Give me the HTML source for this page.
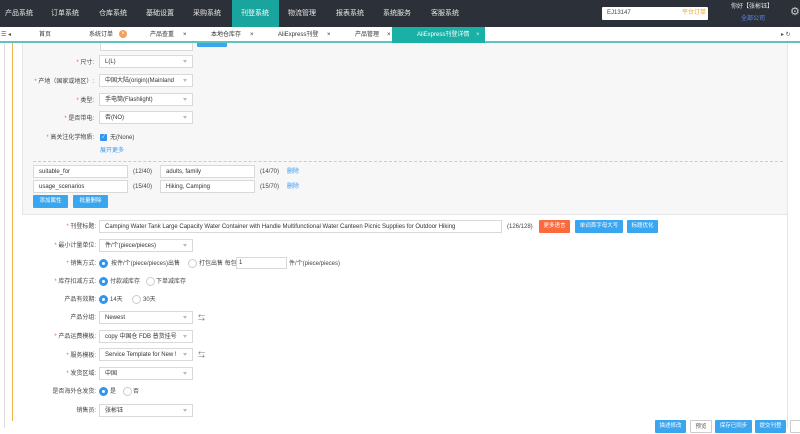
<!DOCTYPE html>
<html><head><meta charset="utf-8"><style>
*{box-sizing:border-box;margin:0;padding:0}
body{width:800px;height:428px;overflow:hidden;background:#fff;font-family:"Liberation Sans","Noto Sans CJK SC",sans-serif;font-size:6.5px;color:#333;position:relative}
.a{position:absolute}
.nav{left:0;top:0;width:800px;height:27px;background:#2c3038;z-index:5}
.nav span{position:absolute;top:9px;color:#e8e8e8;font-size:7px;line-height:9px}
.tabs{left:0;top:27px;width:800px;height:16px;background:#fff;border-bottom:2px solid #5cc4bd;z-index:5}
.tabs span{position:absolute;top:4px;font-size:6px;line-height:9px;color:#333}
.x{color:#aaa}
.lbl{position:absolute;text-align:right;font-size:6px;line-height:9px;color:#444;width:120px;margin-top:1px}
.lbl b{color:#f55;font-weight:normal}
.sel{position:absolute;height:13px;border:1px solid #d9d9d9;background:#fff;font-size:6px;line-height:11px;padding:1px 5px 0;color:#333;white-space:nowrap;overflow:hidden}
.sel:after{content:"";position:absolute;right:5px;top:4px;border:2.5px solid transparent;border-top:3px solid #bbb}
.inp{position:absolute;height:13px;border:1px solid #d9d9d9;background:#fff;font-size:6px;line-height:11px;padding:1px 5px 0;white-space:nowrap;overflow:hidden}
.btn{position:absolute;height:13px;background:#3aa6f0;color:#fff;font-size:5.5px;text-align:center;line-height:13px;border-radius:1px}
.rad{position:absolute;width:9px;height:9px;border-radius:50%;border:1px solid #ccc;background:#fff}
.rad.on{border:3px solid #2f95ee}
.t{position:absolute;font-size:6px;line-height:9px;color:#444;white-space:nowrap;margin-top:1px}
</style></head><body>
<div class="a nav">
<span style="left:5px">产品系统</span><span style="left:51px">订单系统</span><span style="left:99px">仓库系统</span><span style="left:146px">基础设置</span><span style="left:193px">采购系统</span>
<div class="a" style="left:232px;top:0;width:47px;height:27px;background:#19a59d"></div>
<span style="left:241px;color:#fff">刊登系统</span><span style="left:288px">物流管理</span><span style="left:336px">报表系统</span><span style="left:383px">系统服务</span><span style="left:431px">客服系统</span>
<div class="a" style="left:602px;top:7px;width:106px;height:13px;background:#fff;border-radius:1px"></div>
<span style="left:607px;top:9px;color:#444;font-size:6px">EJ13147</span><span style="left:682px;top:9px;color:#f5a623;font-size:6px">平台订单</span>
<span style="left:731px;top:3px;font-size:6px">你好【张彬钰】</span><span style="left:741px;top:15px;font-size:6px;color:#5b8df5">全部公司</span>
<span style="left:790px;top:6px;font-size:11px;line-height:13px;color:#ccc">⚙</span>
</div>
<div class="a tabs">
<span style="left:1px;color:#555">☰ ◂</span>
<span style="left:39px">首页</span><span style="left:89px">系统订单</span><span style="left:119px;top:3px;width:8px;height:8px;border-radius:50%;background:#f5a05a;color:#fff;font-size:6px;line-height:8px;text-align:center">×</span>
<span style="left:150px">产品查重</span><span class="x" style="left:183px">×</span>
<span style="left:211px">本地仓库存</span><span class="x" style="left:250px">×</span>
<span style="left:278px">AliExpress刊登</span><span class="x" style="left:327px">×</span>
<span style="left:355px">产品管理</span><span class="x" style="left:387px">×</span>
<div class="a" style="left:392px;top:0;width:93px;height:16px;background:#19b0a6"></div>
<span style="left:417px;color:#fff">AliExpress刊登详情</span><span style="left:476px;color:#bfe">×</span>
<span style="left:781px;color:#555">▸ ↻</span>
</div>
<div class="a" style="left:4px;top:43px;width:1px;height:385px;background:#ddd"></div>
<div class="a" style="left:12px;top:43px;width:1px;height:378px;background:#f3b34a"></div>
<div class="a" style="left:22px;top:43px;width:766px;height:172px;background:#f7f7f7;border:1px solid #e6e6e6;border-top:none"></div>
<div class="a" style="left:787px;top:43px;width:1px;height:385px;background:#e6e6e6"></div>
<div class="inp" style="left:100px;top:38px;width:93px"></div><div class="btn" style="left:197px;top:38px;width:30px;height:9px"></div>
<div class="lbl" style="left:-26px;top:58px"><b>* </b>尺寸:</div><div class="sel" style="left:99px;top:55px;width:94px">L(L)</div>
<div class="lbl" style="left:-26px;top:77px"><b>* </b>产地（国家或地区）:</div><div class="sel" style="left:99px;top:74px;width:94px">中国大陆(origin)(Mainland</div>
<div class="lbl" style="left:-26px;top:96px"><b>* </b>类型:</div><div class="sel" style="left:99px;top:93px;width:94px">手电筒(Flashlight)</div>
<div class="lbl" style="left:-26px;top:114px"><b>* </b>是否带电:</div><div class="sel" style="left:99px;top:111px;width:94px">否(NO)</div>
<div class="lbl" style="left:-26px;top:133px"><b>* </b>高关注化学物质:</div>
<div class="a" style="left:100px;top:134px;width:7px;height:7px;background:#2f95ee;border-radius:1px;color:#fff;font-size:5px;line-height:7px;text-align:center">✓</div><div class="t" style="left:110px;top:133px">无(None)</div>
<div class="t" style="left:100px;top:146px;color:#3a9af0">展开更多</div>
<div class="a" style="left:33px;top:161px;width:750px;border-top:1px dashed #ccc"></div>
<div class="inp" style="left:33px;top:165px;width:95px">suitable_for</div><div class="t" style="left:133px;top:167px">(12/40)</div>
<div class="inp" style="left:160px;top:165px;width:95px">adults, family</div><div class="t" style="left:260px;top:167px">(14/70)</div><div class="t" style="left:287px;top:167px;color:#3a9af0">删除</div>
<div class="inp" style="left:33px;top:180px;width:95px">usage_scenarios</div><div class="t" style="left:133px;top:182px">(15/40)</div>
<div class="inp" style="left:160px;top:180px;width:95px">Hiking, Camping</div><div class="t" style="left:260px;top:182px">(15/70)</div><div class="t" style="left:287px;top:182px;color:#3a9af0">删除</div>
<div class="btn" style="left:33px;top:195px;width:35px">添加属性</div><div class="btn" style="left:73px;top:195px;width:35px">批量删除</div>

<div class="lbl" style="left:-24px;top:222px"><b>* </b>刊登标题:</div><div class="inp" style="left:99px;top:220px;width:403px">Camping Water Tank Large Capacity Water Container with Handle Multifunctional Water Canteen Picnic Supplies for Outdoor Hiking</div>
<div class="t" style="left:507px;top:222px">(126/128)</div>
<div class="btn" style="left:539px;top:220px;width:31px;background:#fa6a3c">更多语言</div><div class="btn" style="left:575px;top:220px;width:48px">单词首字母大写</div><div class="btn" style="left:627px;top:220px;width:31px">标题优化</div>
<div class="lbl" style="left:-24px;top:241px"><b>* </b>最小计量单位:</div><div class="sel" style="left:99px;top:239px;width:94px">件/个(piece/pieces)</div>
<div class="lbl" style="left:-24px;top:259px"><b>* </b>销售方式:</div><div class="rad on" style="left:99px;top:259px"></div><div class="t" style="left:111px;top:259px">按件/个(piece/pieces)出售</div>
<div class="rad" style="left:188px;top:259px"></div><div class="t" style="left:199px;top:259px">打包出售 每包</div><div class="inp" style="left:236px;top:257px;width:51px;height:12px;line-height:10px;padding:0 2px">1</div><div class="t" style="left:289px;top:259px">件/个(piece/pieces)</div>
<div class="lbl" style="left:-24px;top:277px"><b>* </b>库存扣减方式:</div><div class="rad on" style="left:99px;top:277px"></div><div class="t" style="left:110px;top:277px">付款减库存</div><div class="rad" style="left:146px;top:277px"></div><div class="t" style="left:156px;top:277px">下单减库存</div>
<div class="lbl" style="left:-24px;top:295px">产品有效期:</div><div class="rad on" style="left:99px;top:295px"></div><div class="t" style="left:110px;top:295px">14天</div><div class="rad" style="left:132px;top:295px"></div><div class="t" style="left:143px;top:295px">30天</div>
<div class="lbl" style="left:-24px;top:313px">产品分组:</div><div class="sel" style="left:99px;top:311px;width:94px">Newest</div><div class="t" style="left:198px;top:313px;color:#777;font-size:7px">⇆</div>
<div class="lbl" style="left:-24px;top:332px"><b>* </b>产品运费模板:</div><div class="sel" style="left:99px;top:330px;width:94px">copy 中国仓 FDB 普货挂号</div>
<div class="lbl" style="left:-24px;top:351px"><b>* </b>服务模板:</div><div class="sel" style="left:99px;top:348px;width:94px">Service Template for New !</div><div class="t" style="left:198px;top:350px;color:#777;font-size:7px">⇆</div>
<div class="lbl" style="left:-24px;top:369px"><b>* </b>发货区域:</div><div class="sel" style="left:99px;top:367px;width:94px">中国</div>
<div class="lbl" style="left:-24px;top:387px">是否海外仓发货:</div><div class="rad on" style="left:99px;top:387px"></div><div class="t" style="left:110px;top:387px">是</div><div class="rad" style="left:123px;top:387px"></div><div class="t" style="left:133px;top:387px">否</div>
<div class="lbl" style="left:-24px;top:406px">销售员:</div><div class="sel" style="left:99px;top:404px;width:94px">张彬钰</div>
<div class="btn" style="left:655px;top:420px;width:31px">描述修改</div>
<div class="btn" style="left:690px;top:420px;width:22px;background:#fff;border:1px solid #ccc;color:#555">预览</div>
<div class="btn" style="left:715px;top:420px;width:37px">保存已同步</div>
<div class="btn" style="left:755px;top:420px;width:31px">提交刊登</div>
<div class="btn" style="left:790px;top:420px;width:12px;background:#fff;border:1px solid #ccc"></div>
</body></html>
